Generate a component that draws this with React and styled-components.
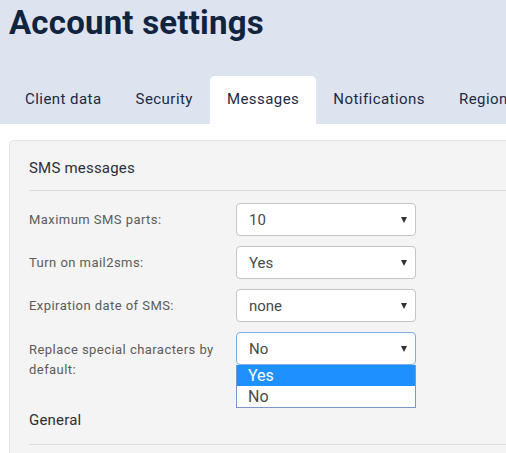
import React from "react";
import styled, { createGlobalStyle } from "styled-components";

const Global = createGlobalStyle`
  html, body { margin: 0; padding: 0; background: #ffffff; overflow: hidden; }
  body { font-family: "Roboto", "Liberation Sans", sans-serif; }
`;

const Page = styled.div`
  width: 506px;
  height: 453px;
  overflow: hidden;
`;

const Header = styled.header`
  background: #dde3ef;
  padding: 0 0 0 8px;
  display: flex;
  flex-direction: column;
`;

const Title = styled.h1`
  margin: 0 0 0 1px;
  padding-top: 3px;
  height: 73px;
  font-family: "Roboto", sans-serif;
  font-weight: 700;
  font-size: 33px;
  line-height: 40px;
  color: #10233f;
  letter-spacing: 0.2px;
`;

const Tabs = styled.nav`
  display: flex;
  white-space: nowrap;
`;

const Tab = styled.div`
  height: 48px;
  padding: 0 17px 3px;
  box-sizing: border-box;
  display: flex;
  align-items: center;
  font-size: 15px;
  letter-spacing: 0.45px;
  color: #1b2a44;
  border-radius: 5px 5px 0 0;
  background: ${(p) => (p.$active ? "#ffffff" : "transparent")};
  flex-shrink: 0;
`;

const Content = styled.main`
  padding: 16px 0 0 9px;
`;

const Panel = styled.section`
  width: 620px;
  background: #f4f4f4;
  border: 1px solid #e3e3e3;
  border-radius: 5px;
  padding: 0 0 0 19px;
  height: 330px;
`;

const SectionTitle = styled.h2`
  margin: 0;
  height: 50px;
  display: flex;
  align-items: center;
  padding-top: 4px;
  box-sizing: border-box;
  font-size: 15px;
  font-weight: 400;
  letter-spacing: 0.2px;
  color: #2a2f38;
  border-bottom: 1px solid #dcdcdc;
`;

const Form = styled.div`
  padding-top: 12px;
  display: flex;
  flex-direction: column;
  gap: 10px;
`;

const Row = styled.div`
  display: grid;
  grid-template-columns: 207px 180px;
  align-items: ${(p) => (p.$top ? "start" : "center")};
  position: relative;
`;

const Label = styled.label`
  font-size: 13px;
  line-height: 20px;
  color: #5b5b5b;
  letter-spacing: 0.45px;
  padding-top: ${(p) => (p.$top ? "8px" : "0")};
`;

const Select = styled.div`
  height: 33px;
  box-sizing: border-box;
  background: #ffffff;
  border: 1px solid ${(p) => (p.$open ? "#7aaee6" : "#c4c4c4")};
  border-radius: 4px;
  display: flex;
  align-items: center;
  justify-content: space-between;
  padding: 0 8px 0 12px;
  font-size: 15px;
  color: #4a4a4a;
`;

const Arrow = styled.span`
  width: 0;
  height: 0;
  border-left: 3px solid transparent;
  border-right: 3px solid transparent;
  border-top: 6px solid #333;
  margin-top: 1px;
`;

const DropList = styled.ul`
  position: absolute;
  left: 207px;
  top: 33px;
  width: 180px;
  box-sizing: border-box;
  margin: 0;
  padding: 0;
  list-style: none;
  background: #ffffff;
  border: 1px solid #7b97c9;
  border-top: none;
  z-index: 2;
`;

const Option = styled.li`
  height: 21px;
  line-height: 21px;
  padding-left: 11px;
  font-size: 16px;
  color: ${(p) => (p.$hl ? "#ffffff" : "#4a4a4a")};
  background: ${(p) => (p.$hl ? "#1e90ff" : "transparent")};
`;

const SubTitle = styled.h2`
  margin: 0;
  margin-top: 19px;
  height: 46px;
  display: flex;
  align-items: center;
  padding-bottom: 4px;
  box-sizing: border-box;
  font-size: 15px;
  font-weight: 400;
  letter-spacing: 0.2px;
  color: #2a2f38;
  border-bottom: 1px solid #dcdcdc;
`;

const rows = [
  { label: "Maximum SMS parts:", value: "10" },
  { label: "Turn on mail2sms:", value: "Yes" },
  { label: "Expiration date of SMS:", value: "none" },
];

export default function App() {
  return (
    <Page>
      <Global />
      <Header>
        <Title>Account settings</Title>
        <Tabs>
          <Tab>Client data</Tab>
          <Tab>Security</Tab>
          <Tab $active>Messages</Tab>
          <Tab>Notifications</Tab>
          <Tab>Regional settings</Tab>
        </Tabs>
      </Header>
      <Content>
        <Panel>
          <SectionTitle>SMS messages</SectionTitle>
          <Form>
            {rows.map((r) => (
              <Row key={r.label}>
                <Label>{r.label}</Label>
                <Select>
                  {r.value}
                  <Arrow />
                </Select>
              </Row>
            ))}
            <Row $top>
              <Label $top>
                Replace special characters by
                <br />
                default:
              </Label>
              <Select $open>
                No
                <Arrow />
              </Select>
              <DropList>
                <Option $hl>Yes</Option>
                <Option>No</Option>
              </DropList>
            </Row>
          </Form>
          <SubTitle>General</SubTitle>
        </Panel>
      </Content>
    </Page>
  );
}
